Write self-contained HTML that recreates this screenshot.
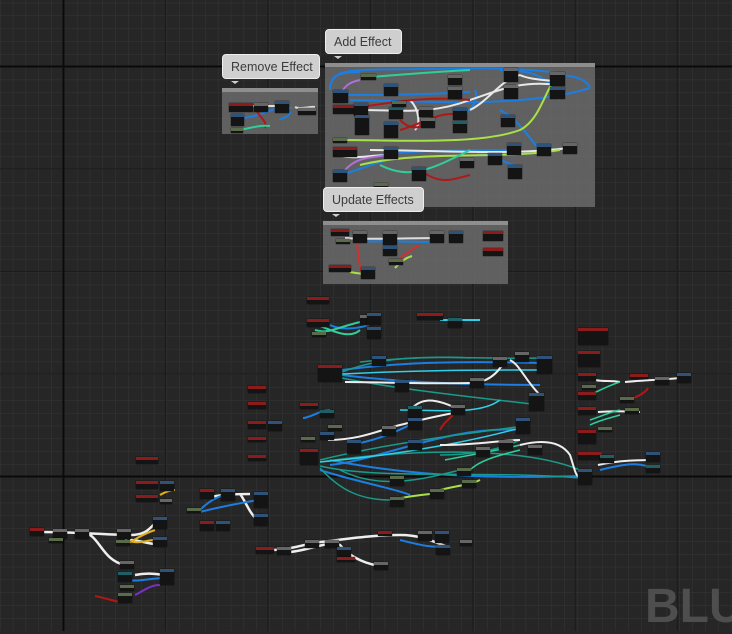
<!DOCTYPE html>
<html><head><meta charset="utf-8"><style>
html,body{margin:0;padding:0;width:732px;height:631px;overflow:hidden;background:#262626}
.c{position:absolute;background:rgba(110,110,110,.82);border-top:4px solid #8e8e8e;box-sizing:border-box}
.b{position:absolute;background:#cfcfcf;border:1px solid #eee;border-radius:4px;color:#3c3c3c;font:12.5px "Liberation Sans",sans-serif;height:25px;line-height:24px;padding:0 8px;box-sizing:border-box;white-space:nowrap}
.b:after{content:"";position:absolute;left:8px;bottom:-6px;border:4px solid transparent;border-top:3px solid #cfcfcf;border-bottom:0}
.n{position:absolute;background:#141414;border-top:3px solid #555;box-sizing:border-box;box-shadow:0 0 1px #000}
.r{border-top-color:#8c1c1c}.u{border-top-color:#2e5278}.g{border-top-color:#596b4a}.t{border-top-color:#1f5f66}.k{border-top-color:#666}
svg{position:absolute;left:0;top:0}
</style></head><body>
<svg width="732" height="631">
<defs><pattern id="m" width="12.82" height="12.82" patternUnits="userSpaceOnUse" x="0" y="2.7">
<path d="M0 0H12.82M0 0V12.82" stroke="#363636" stroke-width="1" fill="none"/></pattern></defs>
<rect width="732" height="631" fill="url(#m)"/>
<g stroke="#1c1c1c" stroke-width="1.2">
<path d="M165.5 0V631M268 0V631M370.5 0V631M473 0V631M575.5 0V631M677.5 0V631M0 169H732M0 271.5H732M0 374H732"/>
</g>
<g stroke="#0a0a0a" stroke-width="2"><path d="M63.5 0V631M0 66.5H732M0 476.5H732"/></g>
</svg>
<div class="c" style="left:222px;top:88px;width:96px;height:46px"></div>
<div class="c" style="left:325px;top:63px;width:270px;height:144px"></div>
<div class="c" style="left:323px;top:221px;width:185px;height:63px"></div>
<svg width="732" height="631" fill="none" stroke-width="2">
<path d="M240 106C260 106 260 106 280 106M295 107C300 110 310 106 315 107" stroke="#ddd"/>
<path d="M240 118C260 118 270 106 292 108M290 112C290 118 280 118 280 120" stroke="#1b7ee0"/>
<path d="M255 108C260 118 268 122 265 128" stroke="#b01818"/>
<path d="M240 130C250 128 260 125 270 126" stroke="#2ecf9a"/>
<g stroke="#1b7ee0"><path d="M332 80C340 68 360 70 420 69C460 69 500 66 560 73"/><path d="M340 95C380 95 420 95 470 92"/><path d="M350 100C400 100 520 110 590 88"/><path d="M380 155C420 150 460 150 520 150"/><path d="M340 175C360 170 380 160 400 158"/><path d="M500 110C520 120 530 140 540 150"/><path d="M470 150C520 165 520 170 520 170"/><path d="M475 90C480 100 470 110 460 120"/><path d="M500 70C540 70 550 80 560 100"/><path d="M330 90C330 75 340 72 360 72"/><path d="M560 75C580 76 588 82 590 88"/></g>
<g stroke="#e8e8e8"><path d="M360 110C400 110 430 115 470 100C500 90 520 80 560 85"/><path d="M370 150C410 150 440 152 500 152C530 152 550 150 570 148"/><path d="M520 75C530 80 550 80 560 82"/><path d="M410 100C420 110 420 125 415 130"/><path d="M340 155C350 160 370 155 390 155"/><path d="M470 110C490 100 500 80 520 75"/></g>
<g stroke="#a8e04a"><path d="M340 140C400 140 480 145 520 130C540 120 545 90 555 80"/><path d="M360 165C420 150 500 160 560 150"/></g>
<g stroke="#2ecf9a"><path d="M370 77C400 75 430 72 470 70"/><path d="M380 165C410 180 430 170 470 150"/></g>
<g stroke="#b01818"><path d="M340 110C380 105 420 95 470 100"/><path d="M400 120C410 130 420 130 430 120"/><path d="M400 130C420 125 440 110 460 115"/><path d="M420 170C440 185 450 180 470 175"/></g>
<g stroke="#b46ed8"><path d="M340 95C345 85 350 82 360 80"/><path d="M345 170C355 160 360 158 390 155"/></g>
<path d="M345 238C370 240 400 238 440 238" stroke="#ddd"/>
<path d="M360 242C380 240 400 242 440 242" stroke="#1b7ee0"/>
<path d="M357 240C358 260 360 268 362 272M420 245C410 250 405 255 400 258" stroke="#d03030"/>
<path d="M395 268C400 262 405 258 412 256M350 272C360 274 365 274 370 274" stroke="#a8e04a"/>
<g stroke="#1b7ee0" stroke-width="2"><path d="M342 370C380 365 430 360 540 363"/><path d="M342 375C380 380 450 385 540 385"/><path d="M330 465C380 460 450 425 520 430"/><path d="M330 460C380 470 450 480 580 476"/><path d="M320 470C350 480 400 490 410 495"/><path d="M350 445C380 440 400 430 420 420"/><path d="M330 325C340 330 360 330 375 322"/><path d="M303 418C310 418 320 410 330 410"/></g>
<g stroke="#1a9a8a" stroke-width="1.5"><path d="M342 372C400 350 450 360 540 358"/><path d="M342 378C400 390 500 400 540 405"/><path d="M320 460C400 440 500 430 530 425"/><path d="M320 462C400 450 520 445 580 470"/><path d="M320 466C380 480 480 470 580 478"/><path d="M320 468C340 490 360 500 390 500"/><path d="M340 470C380 490 420 480 460 470"/><path d="M440 455C470 455 500 450 520 440"/><path d="M360 362C400 358 450 356 470 358"/></g>
<g stroke="#2fd0e8" stroke-width="1.5"><path d="M342 374C420 370 480 370 540 370"/><path d="M320 462C400 455 480 440 530 425"/><path d="M400 410C440 410 480 415 500 400"/></g>
<g stroke="#eee" stroke-width="2"><path d="M345 382C380 382 420 384 470 383C490 383 500 370 505 360M510 360C520 365 525 380 540 395"/><path d="M328 440C360 440 380 430 400 425C420 420 440 415 460 412M410 410C420 400 430 395 460 410"/><path d="M440 445C480 445 500 440 520 440M520 445C540 440 560 440 570 455C575 470 575 475 580 478"/></g>
<path d="M440 430C445 420 450 420 455 412" stroke="#b01818"/>
<path d="M440 490C460 485 470 485 480 480M390 500C400 498 420 495 430 494" stroke="#a8e04a"/>
<path d="M470 470C480 460 500 455 520 450M445 460C470 455 500 450 520 445" stroke="#2ecf9a" stroke-width="1.5"/>
<path d="M318 325C330 330 350 340 360 330M315 330C330 335 340 325 370 320" stroke="#2ecf9a"/>
<path d="M440 320C460 320 470 320 480 320" stroke="#2fd0e8"/>
<g stroke="#eee"><path d="M595 380C605 382 610 380 620 382M598 412C620 410 630 412 640 412M625 382C645 380 660 380 680 378M598 465C620 460 640 460 660 460"/></g>
<g stroke="#2ecf9a" stroke-width="1.5"><path d="M590 395C600 390 610 385 620 382M590 425C600 420 610 418 620 415M590 420C605 415 610 412 620 410"/></g>
<path d="M630 400C640 395 645 393 648 388" stroke="#b01818"/>
<path d="M600 470C620 465 640 460 655 470" stroke="#1b7ee0"/>
<g stroke="#eee" stroke-width="2.5"><path d="M40 532C80 532 110 535 130 535C150 535 150 525 160 520M80 532C100 532 100 560 125 565"/><path d="M130 540C140 540 150 545 165 545"/><path d="M135 575C150 572 160 575 165 575"/><path d="M210 497C220 495 230 494 250 494M240 494C245 500 250 515 258 520"/><path d="M270 550C290 550 300 545 320 542C340 540 370 535 400 535C420 535 430 540 450 548M290 552C310 550 330 540 340 545C350 558 370 566 385 566"/></g>
<path d="M125 545C135 540 140 535 155 530M125 540C140 545 145 540 155 540" stroke="#e0b020"/>
<path d="M160 495C165 492 170 490 175 490" stroke="#e0b020"/>
<path d="M200 510C210 500 220 495 230 494M200 512C215 508 230 505 258 500" stroke="#1b7ee0"/>
<path d="M125 580C140 582 150 578 165 578" stroke="#1b7ee0"/>
<path d="M135 595C145 590 150 585 160 585" stroke="#7a30c8"/>
<path d="M95 596C105 598 110 600 120 602" stroke="#b01818"/>
<path d="M400 540C420 545 430 548 450 546" stroke="#1b7ee0"/>
</svg>
<i class="n r" style="left:229px;top:103px;width:24px;height:9px"></i>
<i class="n k" style="left:254px;top:103px;width:14px;height:9px"></i>
<i class="n u" style="left:275px;top:101px;width:14px;height:12px"></i>
<i class="n u" style="left:231px;top:114px;width:13px;height:12px"></i>
<i class="n g" style="left:231px;top:128px;width:12px;height:5px"></i>
<i class="n k" style="left:298px;top:108px;width:18px;height:7px"></i>
<i class="n u" style="left:333px;top:90px;width:15px;height:13px"></i>
<i class="n r" style="left:333px;top:105px;width:22px;height:9px"></i>
<i class="n u" style="left:354px;top:103px;width:14px;height:13px"></i>
<i class="n u" style="left:355px;top:115px;width:14px;height:20px"></i>
<i class="n g" style="left:361px;top:74px;width:15px;height:6px"></i>
<i class="n u" style="left:384px;top:84px;width:14px;height:12px"></i>
<i class="n t" style="left:389px;top:107px;width:14px;height:12px"></i>
<i class="n g" style="left:392px;top:101px;width:14px;height:6px"></i>
<i class="n k" style="left:419px;top:107px;width:14px;height:10px"></i>
<i class="n k" style="left:421px;top:118px;width:14px;height:10px"></i>
<i class="n u" style="left:384px;top:122px;width:14px;height:16px"></i>
<i class="n k" style="left:448px;top:75px;width:14px;height:10px"></i>
<i class="n k" style="left:448px;top:87px;width:14px;height:12px"></i>
<i class="n u" style="left:453px;top:108px;width:14px;height:12px"></i>
<i class="n t" style="left:453px;top:121px;width:14px;height:12px"></i>
<i class="n k" style="left:504px;top:68px;width:14px;height:14px"></i>
<i class="n k" style="left:504px;top:85px;width:14px;height:14px"></i>
<i class="n k" style="left:550px;top:72px;width:15px;height:14px"></i>
<i class="n u" style="left:550px;top:87px;width:15px;height:12px"></i>
<i class="n u" style="left:501px;top:115px;width:14px;height:12px"></i>
<i class="n u" style="left:507px;top:143px;width:14px;height:12px"></i>
<i class="n u" style="left:488px;top:153px;width:14px;height:12px"></i>
<i class="n u" style="left:537px;top:144px;width:14px;height:12px"></i>
<i class="n k" style="left:563px;top:143px;width:14px;height:11px"></i>
<i class="n u" style="left:384px;top:147px;width:14px;height:12px"></i>
<i class="n k" style="left:460px;top:158px;width:14px;height:10px"></i>
<i class="n u" style="left:508px;top:165px;width:14px;height:14px"></i>
<i class="n u" style="left:412px;top:167px;width:14px;height:14px"></i>
<i class="n u" style="left:333px;top:170px;width:14px;height:12px"></i>
<i class="n r" style="left:333px;top:147px;width:24px;height:10px"></i>
<i class="n g" style="left:333px;top:138px;width:14px;height:5px"></i>
<i class="n g" style="left:374px;top:183px;width:14px;height:6px"></i>
<i class="n r" style="left:331px;top:229px;width:18px;height:7px"></i>
<i class="n k" style="left:353px;top:231px;width:14px;height:12px"></i>
<i class="n k" style="left:383px;top:231px;width:14px;height:14px"></i>
<i class="n u" style="left:383px;top:246px;width:14px;height:10px"></i>
<i class="n k" style="left:430px;top:231px;width:14px;height:12px"></i>
<i class="n u" style="left:449px;top:231px;width:14px;height:12px"></i>
<i class="n r" style="left:483px;top:231px;width:20px;height:10px"></i>
<i class="n r" style="left:483px;top:248px;width:20px;height:8px"></i>
<i class="n r" style="left:329px;top:265px;width:22px;height:7px"></i>
<i class="n u" style="left:361px;top:267px;width:14px;height:12px"></i>
<i class="n g" style="left:389px;top:259px;width:14px;height:6px"></i>
<i class="n g" style="left:336px;top:239px;width:14px;height:5px"></i>
<i class="n r" style="left:307px;top:297px;width:22px;height:7px"></i>
<i class="n r" style="left:307px;top:319px;width:22px;height:8px"></i>
<i class="n k" style="left:360px;top:315px;width:14px;height:10px"></i>
<i class="n u" style="left:367px;top:313px;width:14px;height:12px"></i>
<i class="n u" style="left:367px;top:327px;width:14px;height:12px"></i>
<i class="n g" style="left:312px;top:332px;width:14px;height:5px"></i>
<i class="n r" style="left:417px;top:313px;width:26px;height:7px"></i>
<i class="n t" style="left:448px;top:318px;width:14px;height:10px"></i>
<i class="n r" style="left:318px;top:365px;width:24px;height:17px"></i>
<i class="n u" style="left:395px;top:380px;width:14px;height:12px"></i>
<i class="n u" style="left:372px;top:356px;width:14px;height:10px"></i>
<i class="n k" style="left:493px;top:357px;width:14px;height:10px"></i>
<i class="n k" style="left:515px;top:352px;width:14px;height:10px"></i>
<i class="n u" style="left:537px;top:356px;width:15px;height:18px"></i>
<i class="n u" style="left:529px;top:393px;width:15px;height:18px"></i>
<i class="n k" style="left:470px;top:378px;width:14px;height:10px"></i>
<i class="n r" style="left:300px;top:403px;width:18px;height:6px"></i>
<i class="n t" style="left:320px;top:410px;width:14px;height:8px"></i>
<i class="n t" style="left:408px;top:406px;width:14px;height:12px"></i>
<i class="n u" style="left:408px;top:418px;width:14px;height:12px"></i>
<i class="n u" style="left:408px;top:440px;width:14px;height:10px"></i>
<i class="n k" style="left:451px;top:405px;width:14px;height:10px"></i>
<i class="n u" style="left:516px;top:418px;width:14px;height:16px"></i>
<i class="n k" style="left:382px;top:426px;width:14px;height:10px"></i>
<i class="n k" style="left:499px;top:440px;width:14px;height:10px"></i>
<i class="n k" style="left:528px;top:445px;width:14px;height:10px"></i>
<i class="n r" style="left:300px;top:449px;width:18px;height:16px"></i>
<i class="n g" style="left:301px;top:437px;width:14px;height:5px"></i>
<i class="n u" style="left:347px;top:440px;width:14px;height:14px"></i>
<i class="n u" style="left:320px;top:432px;width:14px;height:8px"></i>
<i class="n g" style="left:328px;top:425px;width:14px;height:6px"></i>
<i class="n g" style="left:390px;top:476px;width:14px;height:10px"></i>
<i class="n g" style="left:430px;top:489px;width:14px;height:10px"></i>
<i class="n g" style="left:390px;top:497px;width:14px;height:10px"></i>
<i class="n g" style="left:457px;top:468px;width:14px;height:8px"></i>
<i class="n g" style="left:462px;top:480px;width:14px;height:8px"></i>
<i class="n u" style="left:578px;top:469px;width:14px;height:16px"></i>
<i class="n k" style="left:476px;top:447px;width:14px;height:10px"></i>
<i class="n r" style="left:578px;top:328px;width:30px;height:17px"></i>
<i class="n r" style="left:578px;top:351px;width:22px;height:16px"></i>
<i class="n r" style="left:578px;top:373px;width:18px;height:8px"></i>
<i class="n r" style="left:578px;top:392px;width:18px;height:8px"></i>
<i class="n r" style="left:578px;top:407px;width:18px;height:8px"></i>
<i class="n r" style="left:578px;top:430px;width:18px;height:14px"></i>
<i class="n r" style="left:578px;top:452px;width:24px;height:8px"></i>
<i class="n g" style="left:582px;top:385px;width:14px;height:5px"></i>
<i class="n g" style="left:598px;top:427px;width:14px;height:5px"></i>
<i class="n t" style="left:600px;top:455px;width:14px;height:8px"></i>
<i class="n u" style="left:646px;top:452px;width:14px;height:10px"></i>
<i class="n t" style="left:646px;top:465px;width:14px;height:8px"></i>
<i class="n g" style="left:620px;top:397px;width:14px;height:6px"></i>
<i class="n g" style="left:625px;top:408px;width:14px;height:6px"></i>
<i class="n r" style="left:630px;top:374px;width:18px;height:5px"></i>
<i class="n k" style="left:655px;top:377px;width:14px;height:8px"></i>
<i class="n u" style="left:677px;top:373px;width:14px;height:10px"></i>
<i class="n r" style="left:248px;top:386px;width:18px;height:7px"></i>
<i class="n r" style="left:248px;top:402px;width:18px;height:7px"></i>
<i class="n r" style="left:248px;top:421px;width:18px;height:8px"></i>
<i class="n u" style="left:268px;top:421px;width:14px;height:10px"></i>
<i class="n r" style="left:248px;top:437px;width:18px;height:5px"></i>
<i class="n r" style="left:248px;top:455px;width:18px;height:6px"></i>
<i class="n r" style="left:136px;top:457px;width:22px;height:7px"></i>
<i class="n r" style="left:136px;top:481px;width:22px;height:8px"></i>
<i class="n u" style="left:160px;top:481px;width:14px;height:10px"></i>
<i class="n r" style="left:136px;top:495px;width:22px;height:7px"></i>
<i class="n k" style="left:160px;top:499px;width:12px;height:5px"></i>
<i class="n r" style="left:200px;top:489px;width:14px;height:10px"></i>
<i class="n u" style="left:221px;top:489px;width:14px;height:12px"></i>
<i class="n g" style="left:187px;top:508px;width:14px;height:5px"></i>
<i class="n r" style="left:200px;top:521px;width:14px;height:10px"></i>
<i class="n u" style="left:216px;top:521px;width:14px;height:10px"></i>
<i class="n u" style="left:254px;top:492px;width:14px;height:16px"></i>
<i class="n u" style="left:254px;top:514px;width:14px;height:12px"></i>
<i class="n r" style="left:30px;top:528px;width:14px;height:8px"></i>
<i class="n k" style="left:53px;top:529px;width:14px;height:10px"></i>
<i class="n k" style="left:75px;top:529px;width:14px;height:10px"></i>
<i class="n g" style="left:49px;top:538px;width:14px;height:5px"></i>
<i class="n k" style="left:117px;top:529px;width:14px;height:10px"></i>
<i class="n g" style="left:116px;top:540px;width:14px;height:6px"></i>
<i class="n u" style="left:153px;top:517px;width:14px;height:12px"></i>
<i class="n u" style="left:153px;top:537px;width:14px;height:10px"></i>
<i class="n k" style="left:120px;top:561px;width:14px;height:8px"></i>
<i class="n t" style="left:118px;top:572px;width:14px;height:10px"></i>
<i class="n g" style="left:120px;top:585px;width:14px;height:6px"></i>
<i class="n g" style="left:118px;top:593px;width:14px;height:10px"></i>
<i class="n u" style="left:160px;top:569px;width:14px;height:16px"></i>
<i class="n r" style="left:256px;top:547px;width:18px;height:7px"></i>
<i class="n k" style="left:277px;top:547px;width:14px;height:8px"></i>
<i class="n k" style="left:305px;top:540px;width:14px;height:8px"></i>
<i class="n k" style="left:325px;top:540px;width:14px;height:8px"></i>
<i class="n u" style="left:337px;top:547px;width:14px;height:10px"></i>
<i class="n r" style="left:378px;top:531px;width:14px;height:5px"></i>
<i class="n k" style="left:374px;top:562px;width:14px;height:8px"></i>
<i class="n k" style="left:418px;top:531px;width:14px;height:10px"></i>
<i class="n u" style="left:435px;top:531px;width:14px;height:12px"></i>
<i class="n u" style="left:436px;top:545px;width:14px;height:10px"></i>
<i class="n k" style="left:460px;top:540px;width:12px;height:6px"></i>
<i class="n r" style="left:337px;top:557px;width:18px;height:5px"></i>
<div class="b" style="left:222px;top:54px;width:98px">Remove Effect</div>
<div class="b" style="left:325px;top:29px;width:77px">Add Effect</div>
<div class="b" style="left:323px;top:187px;width:101px">Update Effects</div>
<div style="position:absolute;left:645px;top:579px;font:bold 48px 'Liberation Sans Narrow','Liberation Sans',sans-serif;line-height:55px;color:#4e4e4e;letter-spacing:0px">BLU</div>
</body></html>
